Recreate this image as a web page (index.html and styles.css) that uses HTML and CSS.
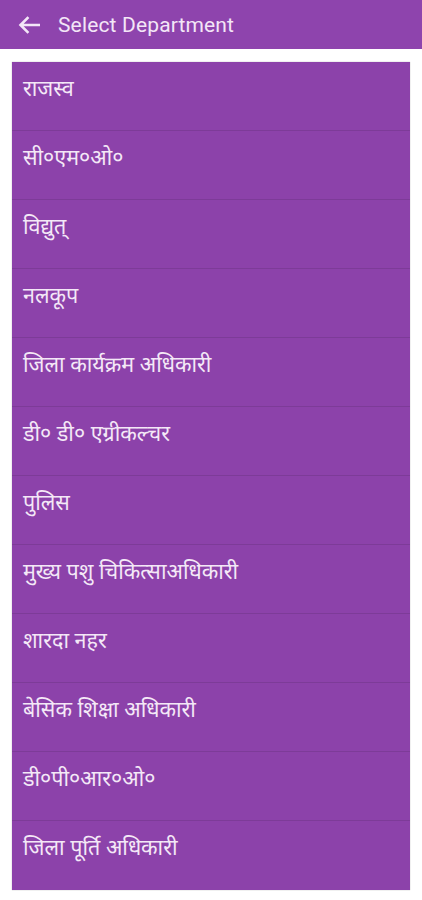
FILE: index.html
```html
<!DOCTYPE html>
<html lang="hi">
<head>
<meta charset="utf-8">
<title>Select Department</title>
<link rel="stylesheet" href="styles.css">
</head>
<body>
<header class="appbar">
  <svg class="back" width="22" height="18" viewBox="0 0 22 18" aria-hidden="true">
    <path d="M21 9H3M9.5 2L2.5 9l7 7" fill="none" stroke="#f3e6f7" stroke-width="2.6" stroke-linecap="square"/>
  </svg>
  <h1 class="title">Select Department</h1>
</header>
<main class="content">
  <ul class="list">
    <li class="item">राजस्व</li>
    <li class="item">सी०एम०ओ०</li>
    <li class="item">विद्युत्</li>
    <li class="item">नलकूप</li>
    <li class="item">जिला कार्यक्रम अधिकारी</li>
    <li class="item">डी० डी० एग्रीकल्चर</li>
    <li class="item">पुलिस</li>
    <li class="item">मुख्य पशु चिकित्साअधिकारी</li>
    <li class="item">शारदा नहर</li>
    <li class="item">बेसिक शिक्षा अधिकारी</li>
    <li class="item">डी०पी०आर०ओ०</li>
    <li class="item">जिला पूर्ति अधिकारी</li>
  </ul>
</main>
</body>
</html>
```
FILE: styles.css
```css
* { box-sizing: border-box; }
html, body { margin: 0; padding: 0; background: #ffffff; }
body { font-family: Roboto, "Noto Sans", "Noto Sans Devanagari", sans-serif; width: 422px; }
.appbar {
  height: 49px;
  background: #8e44ad;
  display: flex;
  align-items: center;
  padding-left: 18px;
  gap: 18px;
}
.back { display: block; }
.title {
  margin: 0;
  font-size: 21px;
  font-weight: 400;
  color: #f3e6f7;
  letter-spacing: 0.15px;
}
.content { padding: 13px 12px 10px 12px; }
.list {
  list-style: none;
  margin: 0;
  padding: 0;
  background: #8c42aa;
  box-shadow: 0 0 1px rgba(0,0,0,0.35);
}
.item {
  height: 69px;
  padding: 14px 11px 0;
  font-family: "Noto Sans Devanagari", "Noto Sans", sans-serif;
  font-size: 21.5px;
  line-height: 30px;
  color: #f4e8f7;
  border-bottom: 1px solid #7d3b98;
}
.item:last-child { border-bottom: none; }
```
